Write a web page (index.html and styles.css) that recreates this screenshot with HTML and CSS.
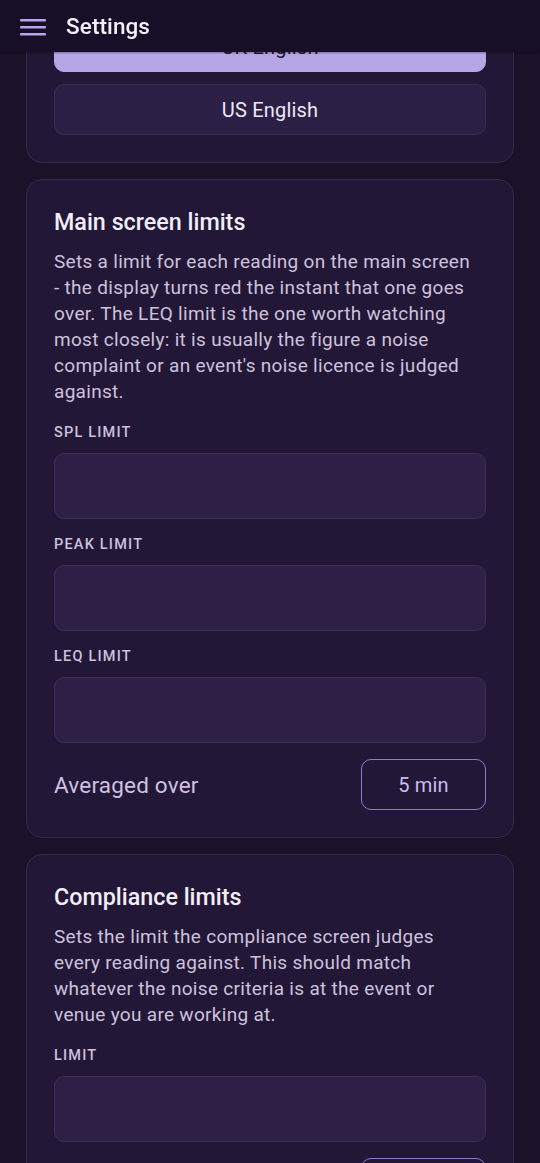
FILE: index.html
```html
<!DOCTYPE html>
<html lang="en">
<head>
<meta charset="utf-8">
<title>Settings</title>
<link rel="stylesheet" href="styles.css">
</head>
<body>
<header class="topbar">
  <svg class="menu-icon" width="26" height="20" viewBox="0 0 26 20" aria-hidden="true">
    <rect x="0" y="2" width="26" height="2.6" rx="1" fill="#b7a4ea"/>
    <rect x="0" y="9" width="26" height="2.6" rx="1" fill="#b7a4ea"/>
    <rect x="0" y="16" width="26" height="2.6" rx="1" fill="#b7a4ea"/>
  </svg>
  <h1 class="topbar-title">Settings</h1>
</header>

<main class="content">
  <section class="card card-partial">
    <div class="choice-list">
      <button class="choice choice-active">UK English</button>
      <button class="choice">US English</button>
    </div>
  </section>

  <section class="card">
    <h2 class="card-title">Main screen limits</h2>
    <p class="card-desc">Sets a limit for each reading on the main screen - the display turns red the instant that one goes over. The LEQ limit is the one worth watching most closely: it is usually the figure a noise complaint or an event's noise licence is judged against.</p>
    <div class="field">
      <label class="field-label">SPL LIMIT</label>
      <div class="field-input"></div>
    </div>
    <div class="field">
      <label class="field-label">PEAK LIMIT</label>
      <div class="field-input"></div>
    </div>
    <div class="field">
      <label class="field-label">LEQ LIMIT</label>
      <div class="field-input"></div>
    </div>
    <div class="row">
      <span class="row-label">Averaged over</span>
      <button class="outline-btn">5 min</button>
    </div>
  </section>

  <section class="card">
    <h2 class="card-title">Compliance limits</h2>
    <p class="card-desc">Sets the limit the compliance screen judges every reading against. This should match whatever the noise criteria is at the event or venue you are working at.</p>
    <div class="field">
      <label class="field-label">LIMIT</label>
      <div class="field-input"></div>
    </div>
    <div class="row">
      <span class="row-label">Averaged over</span>
      <button class="outline-btn">5 min</button>
    </div>
  </section>
</main>
</body>
</html>
```

FILE: styles.css
```css
* { box-sizing: border-box; }

html, body {
  margin: 0;
  padding: 0;
  background: #1b1229;
  font-family: Roboto, "Noto Sans", "Liberation Sans", sans-serif;
  overflow: hidden;
}

.topbar {
  position: fixed;
  top: 0;
  left: 0;
  right: 0;
  height: 52px;
  background: #170f28;
  display: flex;
  align-items: center;
  gap: 20px;
  padding: 0 0 0 20px;
  z-index: 10;
  box-shadow: 0 1px 2px rgba(0,0,0,0.35);
}

.menu-icon { display: block; margin-top: 1px; }

.topbar-title {
  margin: 0;
  font-size: 22.5px;
  font-weight: 500;
  color: #f3eef8;
  letter-spacing: 0.1px;
}

.content {
  padding: 0 26px;
  display: flex;
  flex-direction: column;
  gap: 16px;
}

.card {
  background: #221736;
  border: 1px solid #35294d;
  border-radius: 16px;
  padding: 28px 27px 27px;
  display: flex;
  flex-direction: column;
}

.card-partial {
  margin-top: -7px;
  padding-top: 27px;
  border-top-left-radius: 0;
  border-top-right-radius: 0;
}

.choice-list {
  display: flex;
  flex-direction: column;
  gap: 12px;
}

.choice {
  height: 51px;
  border-radius: 10px;
  border: 1px solid #3a2e55;
  background: #2c1f45;
  color: #eee8f6;
  font-family: inherit;
  font-size: 20px;
  letter-spacing: 0.2px;
}

.choice-active {
  background: #b7a6e5;
  border-color: #b7a6e5;
  color: #1d1430;
}

.card-title {
  margin: 0 0 13px;
  font-size: 23.3px;
  line-height: 28px;
  font-weight: 500;
  color: #f2edf7;
}

.card-desc {
  margin: 0 0 19px;
  padding-right: 6px;
  font-size: 19px;
  line-height: 26px;
  color: #cdc2dc;
  letter-spacing: 0.3px;
}

.field {
  display: flex;
  flex-direction: column;
  gap: 11px;
  margin-bottom: 17px;
}

.field-label {
  font-size: 14.5px;
  line-height: 18px;
  letter-spacing: 1.2px;
  color: #cdc1dd;
  font-weight: 500;
}

.field-input {
  height: 66px;
  border-radius: 10px;
  background: #2d1f45;
  border: 1px solid #3c2f5c;
}

.row {
  display: flex;
  justify-content: space-between;
  align-items: center;
  margin-top: -1px;
}

.row-label {
  font-size: 22.5px;
  color: #cfc2e0;
  letter-spacing: 0.2px;
}

.outline-btn {
  width: 125px;
  height: 51px;
  border-radius: 10px;
  border: 1.5px solid #8f7ccf;
  background: transparent;
  color: #cbbcef;
  font-family: inherit;
  font-size: 20px;
  letter-spacing: 0.2px;
}
```
